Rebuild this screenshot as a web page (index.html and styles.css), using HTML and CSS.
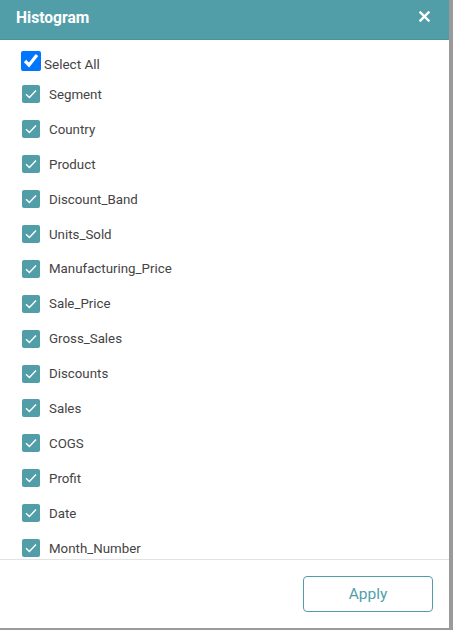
FILE: index.html
```html
<!DOCTYPE html>
<html lang="en">
<head>
    <meta charset="UTF-8">
    <meta name="viewport" content="width=device-width, initial-scale=1.0">
    <title>Histogram</title>
    <link rel="stylesheet" href="styles.css">
</head>
<body>
    <div class="dialog">
        <div class="dialog-header">
            <h2>Histogram</h2>
            <button class="close" type="button" aria-label="Close">
                <svg width="11" height="11" viewBox="0 0 11 11">
                    <path d="M1.5 1.5 L9.5 9.5 M9.5 1.5 L1.5 9.5" stroke="#fff" stroke-width="2.4" stroke-linecap="square"/>
                </svg>
            </button>
        </div>

        <div class="dialog-body">
            <label class="select-all">
                <input type="checkbox" checked>
                <span>Select All</span>
            </label>

            <ul class="fields">
                <li><span class="box"><svg width="18" height="18" viewBox="0 0 18 18"><path d="M4 9.2 L7.4 12.4 L14 5.6" fill="none" stroke="#fff" stroke-width="1.4"/></svg></span>Segment</li>
                <li><span class="box"><svg width="18" height="18" viewBox="0 0 18 18"><path d="M4 9.2 L7.4 12.4 L14 5.6" fill="none" stroke="#fff" stroke-width="1.4"/></svg></span>Country</li>
                <li><span class="box"><svg width="18" height="18" viewBox="0 0 18 18"><path d="M4 9.2 L7.4 12.4 L14 5.6" fill="none" stroke="#fff" stroke-width="1.4"/></svg></span>Product</li>
                <li><span class="box"><svg width="18" height="18" viewBox="0 0 18 18"><path d="M4 9.2 L7.4 12.4 L14 5.6" fill="none" stroke="#fff" stroke-width="1.4"/></svg></span>Discount_Band</li>
                <li><span class="box"><svg width="18" height="18" viewBox="0 0 18 18"><path d="M4 9.2 L7.4 12.4 L14 5.6" fill="none" stroke="#fff" stroke-width="1.4"/></svg></span>Units_Sold</li>
                <li><span class="box"><svg width="18" height="18" viewBox="0 0 18 18"><path d="M4 9.2 L7.4 12.4 L14 5.6" fill="none" stroke="#fff" stroke-width="1.4"/></svg></span>Manufacturing_Price</li>
                <li><span class="box"><svg width="18" height="18" viewBox="0 0 18 18"><path d="M4 9.2 L7.4 12.4 L14 5.6" fill="none" stroke="#fff" stroke-width="1.4"/></svg></span>Sale_Price</li>
                <li><span class="box"><svg width="18" height="18" viewBox="0 0 18 18"><path d="M4 9.2 L7.4 12.4 L14 5.6" fill="none" stroke="#fff" stroke-width="1.4"/></svg></span>Gross_Sales</li>
                <li><span class="box"><svg width="18" height="18" viewBox="0 0 18 18"><path d="M4 9.2 L7.4 12.4 L14 5.6" fill="none" stroke="#fff" stroke-width="1.4"/></svg></span>Discounts</li>
                <li><span class="box"><svg width="18" height="18" viewBox="0 0 18 18"><path d="M4 9.2 L7.4 12.4 L14 5.6" fill="none" stroke="#fff" stroke-width="1.4"/></svg></span>Sales</li>
                <li><span class="box"><svg width="18" height="18" viewBox="0 0 18 18"><path d="M4 9.2 L7.4 12.4 L14 5.6" fill="none" stroke="#fff" stroke-width="1.4"/></svg></span>COGS</li>
                <li><span class="box"><svg width="18" height="18" viewBox="0 0 18 18"><path d="M4 9.2 L7.4 12.4 L14 5.6" fill="none" stroke="#fff" stroke-width="1.4"/></svg></span>Profit</li>
                <li><span class="box"><svg width="18" height="18" viewBox="0 0 18 18"><path d="M4 9.2 L7.4 12.4 L14 5.6" fill="none" stroke="#fff" stroke-width="1.4"/></svg></span>Date</li>
                <li><span class="box"><svg width="18" height="18" viewBox="0 0 18 18"><path d="M4 9.2 L7.4 12.4 L14 5.6" fill="none" stroke="#fff" stroke-width="1.4"/></svg></span>Month_Number</li>
                <li><span class="box"><svg width="18" height="18" viewBox="0 0 18 18"><path d="M4 9.2 L7.4 12.4 L14 5.6" fill="none" stroke="#fff" stroke-width="1.4"/></svg></span>Month_Name</li>
                <li><span class="box"><svg width="18" height="18" viewBox="0 0 18 18"><path d="M4 9.2 L7.4 12.4 L14 5.6" fill="none" stroke="#fff" stroke-width="1.4"/></svg></span>Year</li>
            </ul>
        </div>

        <div class="dialog-footer">
            <button class="apply" type="button">Apply</button>
        </div>
    </div>
</body>
</html>
```

FILE: styles.css
```css
* {
    box-sizing: border-box;
}

body {
    margin: 0;
    padding: 0;
    background-color: #9a9a9a;
    font-family: Roboto, "Liberation Sans", Arial, sans-serif;
}

.dialog {
    width: 449px;
    height: 628px;
    background-color: #fff;
    display: flex;
    flex-direction: column;
}

.dialog-header {
    height: 40px;
    flex-shrink: 0;
    display: flex;
    align-items: center;
    justify-content: space-between;
    padding: 0 19px 6px 16px;
    background-color: #529ea8;
    border-bottom: 1px solid #4b939c;
}

.dialog-header h2 {
    margin: 0;
    padding-top: 2px;
    color: #fff;
    font-size: 15.6px;
    font-weight: bold;
}

.close {
    background: none;
    border: none;
    padding: 0;
    margin: 0;
    display: flex;
    cursor: pointer;
}

.dialog-body {
    flex: 1;
    overflow-y: scroll;
    padding: 11px 0 31px 21px;
}

.dialog-body::-webkit-scrollbar {
    width: 9px;
}

.dialog-body::-webkit-scrollbar-track {
    background-color: #fff;
}

.dialog-body::-webkit-scrollbar-thumb {
    background-color: #ababab;
    border-radius: 0 0 3px 3px;
}

.select-all {
    display: flex;
    align-items: center;
    height: 20px;
    margin-bottom: 6px;
    color: #444;
    font-size: 13.5px;
}

.select-all span {
    padding-top: 5px;
}

.select-all input {
    width: 20px;
    height: 20px;
    margin: 0 3px 0 0;
}

.fields {
    list-style: none;
    margin: 0;
    padding: 0 0 0 1px;
}

.fields li {
    display: flex;
    align-items: center;
    height: 34.9px;
    color: #444;
    font-size: 13.3px;
}

.box {
    width: 18px;
    height: 18px;
    margin-right: 9px;
    border-radius: 2px;
    background-color: #529ea8;
    display: flex;
}

.dialog-footer {
    flex-shrink: 0;
    display: flex;
    justify-content: flex-end;
    padding: 16px;
    border-top: 1px solid #e2e2e2;
}

.apply {
    width: 130px;
    height: 36px;
    padding-bottom: 2px;
    background-color: #fff;
    border: 1px solid #529ea8;
    border-radius: 4px;
    color: #529ea8;
    font-family: Roboto, "Liberation Sans", Arial, sans-serif;
    font-size: 15.5px;
    cursor: pointer;
}
```
